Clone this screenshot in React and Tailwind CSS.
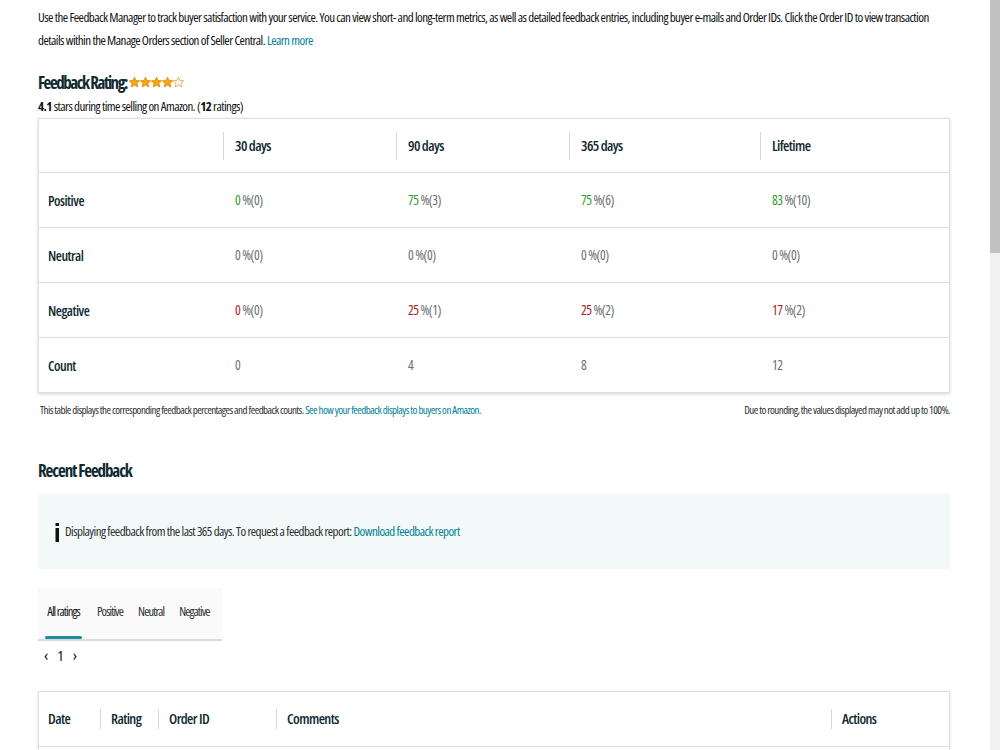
const green = "text-[#2f9a30]";
const red = "text-[#a61d24]";

const rows = [
  { label: "Positive", cells: [["0", "%(0)", green], ["75", "%(3)", green], ["75", "%(6)", green], ["83", "%(10)", green]] },
  { label: "Neutral", cells: [["0", "%(0)", ""], ["0", "%(0)", ""], ["0", "%(0)", ""], ["0", "%(0)", ""]] },
  { label: "Negative", cells: [["0", "%(0)", red], ["25", "%(1)", red], ["25", "%(2)", red], ["17", "%(2)", red]] },
];

function Star({ filled }) {
  return (
    <svg width="11" height="12" viewBox="1.5 1.5 21 20" className="shrink-0">
      <path
        d="M12 2.2l2.9 6.4 7 .7-5.3 4.7 1.6 6.9L12 17.3l-6.2 3.6 1.6-6.9L2.1 9.3l7-.7z"
        fill={filled ? "#f3a712" : "none"}
        stroke={filled ? "#e08c00" : "#e9a23b"}
        strokeWidth="1.6"
        strokeLinejoin="round"
      />
    </svg>
  );
}

function HeadCell({ children, divider = true }) {
  return (
    <div className="flex items-center h-full">
      {divider && <div className="w-px h-[28px] bg-[#d5d9d9]" />}
      <span className="pl-[11px] text-[14.5px] font-semibold tracking-[-0.6px] text-[#0f2a30]">{children}</span>
    </div>
  );
}

function RatingTable() {
  return (
    <div className="mt-[2px] border border-[#dcdfdf] shadow-[0_1px_3px_rgba(0,0,0,0.18)] bg-white">
      <div className="grid grid-cols-[184px_173px_173px_191px_1fr] h-[54px] border-b border-[#dcdfdf]">
        <div />
        <HeadCell>30 days</HeadCell>
        <HeadCell>90 days</HeadCell>
        <HeadCell>365 days</HeadCell>
        <HeadCell>Lifetime</HeadCell>
      </div>
      {rows.map((r) => (
        <div key={r.label} className="grid grid-cols-[184px_173px_173px_191px_1fr] h-[55px] items-center border-b border-[#dcdfdf]">
          <span className="pl-[9px] text-[14px] font-semibold tracking-[-0.5px] text-[#0f2a30]">{r.label}</span>
          {r.cells.map(([n, p, c], i) => (
            <span key={i} className="pl-[12px] text-[13.5px] tracking-[-0.5px] text-[#6b6f6f]">
              <span className={c || "text-[#6b6f6f]"}>{n}</span> {p}
            </span>
          ))}
        </div>
      ))}
      <div className="grid grid-cols-[184px_173px_173px_191px_1fr] h-[54px] items-center">
        <span className="pl-[9px] text-[14px] font-semibold tracking-[-0.5px] text-[#0f2a30]">Count</span>
        {["0", "4", "8", "12"].map((n, i) => (
          <span key={i} className="pl-[12px] text-[13.5px] tracking-[-0.5px] text-[#6b6f6f]">{n}</span>
        ))}
      </div>
    </div>
  );
}

function BottomHead({ children, w, divider = true }) {
  return (
    <div className={`flex items-center h-full ${w}`}>
      {divider && <div className="w-px h-[20px] bg-[#d5d9d9]" />}
      <span className={`${divider ? "pl-[10px]" : "pl-[9px]"} text-[14.5px] font-semibold tracking-[-0.6px] text-[#0f2a30]`}>{children}</span>
    </div>
  );
}

export default function App() {
  return (
    <div className="flex h-[750px] overflow-hidden bg-white font-['Open_Sans',sans-serif] font-stretch-condensed text-[#0f1111]">
      <main className="flex-1 pl-[38px]">
        <div className="w-[912px]">
          <p className="pt-[6px] text-[13px] leading-[23px] tracking-[-0.55px]">
            Use the Feedback Manager to track buyer satisfaction with your service. You can view short- and long-term metrics, as well as detailed feedback entries, including buyer e-mails and Order IDs. Click the Order ID to view transaction details within the Manage Orders section of Seller Central.{" "}
            <a className="text-[#008296]">Learn more</a>
          </p>

          <div className="mt-[18px] flex items-center h-[26px]">
            <h2 className="text-[17px] font-bold tracking-[-1.45px] text-[#0f2a30]">Feedback Rating:</h2>
            <div className="flex ml-[2px] -mt-[3px]">
              <Star filled />
              <Star filled />
              <Star filled />
              <Star filled />
              <Star />
            </div>
          </div>
          <p className="text-[13px] leading-[20px] tracking-[-0.55px]">
            <b>4.1</b> stars during time selling on Amazon. (<b>12</b> ratings)
          </p>

          <RatingTable />

          <div className="flex justify-between mt-[8px] text-[11px] leading-[18px] tracking-[-0.55px] text-[#2b3030]">
            <p className="pl-[2px]">
              This table displays the corresponding feedback percentages and feedback counts.{" "}
              <a className="text-[#008296]">See how your feedback displays to buyers on Amazon.</a>
            </p>
            <p>Due to rounding, the values displayed may not add up to 100%.</p>
          </div>

          <h2 className="mt-[39px] h-[26px] leading-[26px] text-[17px] font-bold tracking-[-1.1px] text-[#0f2a30]">Recent Feedback</h2>

          <div className="mt-[10px] h-[75px] bg-[#f3f8f8] flex items-center pl-[17px] pt-[1px]">
            <svg width="5" height="19" viewBox="0 0 5 19" className="shrink-0">
              <rect x="0.5" y="0" width="3.5" height="3" fill="#0f1111" />
              <rect x="0.5" y="5" width="3.5" height="14" fill="#0f1111" />
            </svg>
            <p className="ml-[5px] text-[13px] tracking-[-0.55px] text-[#2b3030]">
              Displaying feedback from the last 365 days. To request a feedback report:{" "}
              <a className="text-[#008296]">Download feedback report</a>
            </p>
          </div>

          <div className="mt-[19px] w-[184px] h-[53px] bg-[#fafafa] border-b-2 border-[#d8dbdb] flex items-end pl-[7px] gap-[15px] text-[12.5px] tracking-[-0.9px] text-[#2b3030]">
            <div className="flex flex-col items-center">
              <span className="text-[#0f1111]">All ratings</span>
              <div className="mt-[14px] h-[3px] w-[37px] bg-[#1e8c9a] rounded-full" />
            </div>
            <span className="pb-[17px]">Positive</span>
            <span className="pb-[17px]">Neutral</span>
            <span className="pb-[17px]">Negative</span>
          </div>

          <div className="flex items-center gap-[9px] pl-[6px] mt-[2px] h-[24px] text-[15px] text-[#0f1111]">
            <span className="text-[16px]">‹</span>
            <span>1</span>
            <span className="text-[16px]">›</span>
          </div>

          <div className="mt-[24px] border border-[#dcdfdf] shadow-[0_1px_3px_rgba(0,0,0,0.12)]">
            <div className="flex h-[55px] border-b border-[#dcdfdf]">
              <BottomHead w="w-[61px]" divider={false}>Date</BottomHead>
              <BottomHead w="w-[58px]">Rating</BottomHead>
              <BottomHead w="w-[118px]">Order ID</BottomHead>
              <BottomHead w="w-[555px]">Comments</BottomHead>
              <BottomHead w="flex-1">Actions</BottomHead>
            </div>
            <div className="h-[40px]" />
          </div>
        </div>
      </main>
      <div className="w-[10px] h-[750px] bg-[#f1f1f1] flex flex-col">
        <div className="h-[253px] bg-[#c1c1c1]" />
      </div>
    </div>
  );
}
